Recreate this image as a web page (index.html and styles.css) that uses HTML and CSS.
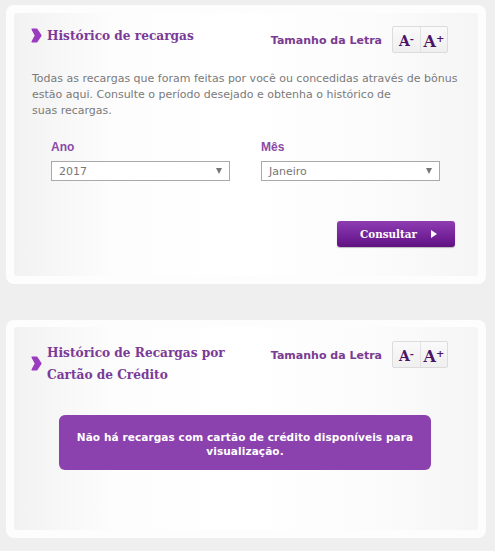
FILE: index.html
```html
<!DOCTYPE html>
<html lang="pt-BR">
<head>
<meta charset="utf-8">
<link rel="stylesheet" href="styles.css">
</head>
<body>
<div class="page">
  <section class="card">
    <div class="panel">
      <div class="header">
        <h2 class="title">
          <svg class="chev" viewBox="0 0 11 15" width="11" height="15"><path d="M1.2 1.2 L5.6 1.2 L9.8 7.5 L5.6 13.8 L1.2 13.8 L4.6 7.5 Z" fill="#9b3cbf" stroke="#9b3cbf" stroke-linejoin="round" stroke-width="1.6"/></svg>
          <span>Histórico de recargas</span>
        </h2>
        <div class="fontsize">
          <span class="fs-label">Tamanho da Letra</span>
          <div class="fs-btns"><span class="fs-btn">A<sup>-</sup></span><span class="fs-btn">A<sup>+</sup></span></div>
        </div>
      </div>
      <p class="intro">Todas as recargas que foram feitas por você ou concedidas através de bônus estão aqui. Consulte o período desejado e obtenha o histórico de<br>suas recargas.</p>
      <div class="form">
        <div class="field">
          <label class="lbl">Ano</label>
          <div class="select"><span>2017</span><i class="arrow"></i></div>
        </div>
        <div class="field">
          <label class="lbl">Mês</label>
          <div class="select"><span>Janeiro</span><i class="arrow"></i></div>
        </div>
      </div>
      <div class="actions">
        <button class="btn">Consultar <i class="play"></i></button>
      </div>
    </div>
  </section>

  <section class="card card2">
    <div class="panel panel2">
      <div class="header header2">
        <h2 class="title title2">
          <svg class="chev" viewBox="0 0 11 15" width="11" height="15"><path d="M1.2 1.2 L5.6 1.2 L9.8 7.5 L5.6 13.8 L1.2 13.8 L4.6 7.5 Z" fill="#9b3cbf" stroke="#9b3cbf" stroke-linejoin="round" stroke-width="1.6"/></svg>
          <span>Histórico de Recargas por<br>Cartão de Crédito</span>
        </h2>
        <div class="fontsize">
          <span class="fs-label">Tamanho da Letra</span>
          <div class="fs-btns"><span class="fs-btn">A<sup>-</sup></span><span class="fs-btn">A<sup>+</sup></span></div>
        </div>
      </div>
      <div class="notice">Não há recargas com cartão de crédito disponíveis para visualização.</div>
    </div>
  </section>
</div>
</body>
</html>
```

FILE: styles.css
```css
html, body { margin: 0; padding: 0; }
body {
  background: #efefef;
  font-family: "DejaVu Sans", Verdana, sans-serif;
}
.page {
  padding: 5px 9px 0 6px;
}
.card {
  background: #fdfdfd;
  border-radius: 8px;
  padding: 8px 8px 8px 8px;
}
.card2 { margin-top: 36px; padding-top: 7px; }
.panel {
  background: linear-gradient(to right, #f2f2f2 0%, #fdfdfd 22%, #ffffff 50%, #fbfbfb 80%, #f5f5f5 100%);
  border-radius: 3px;
  height: 263px;
  box-sizing: border-box;
  padding: 13px 30px 0 17px;
}
.panel2 { height: 203px; padding-top: 14px; }
.header {
  display: flex;
  justify-content: space-between;
  align-items: flex-start;
}
.title {
  margin: -2px 0 0;
  display: flex;
  align-items: center;
  gap: 5px;
  font-family: "DejaVu Serif Condensed", "DejaVu Serif", serif;
  font-weight: bold;
  font-size: 13.5px;
  line-height: 22px;
  color: #7b3a97;
}
.title2 { margin-top: 0; }
.chev { flex: none; display: block; }
.fontsize {
  display: flex;
  align-items: center;
  gap: 10px;
}
.fs-label {
  font-family: "DejaVu Sans", Verdana, sans-serif;
  font-weight: bold;
  font-size: 11px;
  color: #7a3b91;
  padding-top: 1px;
}
.fs-btns {
  display: flex;
  border: 1px solid #dcdcdc;
  border-radius: 2px;
  background: linear-gradient(#fafafa, #efefef);
  height: 25px;
}
.fs-btn {
  width: 27px;
  box-sizing: border-box;
  display: flex;
  align-items: center;
  justify-content: center;
  font-family: "DejaVu Serif", serif;
  font-weight: bold;
  font-size: 14px;
  color: #4d1465;
  padding-top: 3px;
}
.fs-btn + .fs-btn { border-left: 1px solid #e2e2e2; font-size: 16px; }
.fs-btn sup { font-size: 10px; line-height: 0; position: relative; top: -2px; }
.intro {
  margin: 18px 0 0 1px;
  font-size: 11px;
  line-height: 16px;
  color: #7a7a7a;
  width: 430px;
}
.form {
  display: flex;
  gap: 31px;
  padding-left: 20px;
  margin-top: 21px;
}
.field { width: 179px; }
.lbl {
  display: block;
  font-family: "Liberation Sans", Arial, sans-serif;
  font-weight: bold;
  font-size: 12px;
  color: #8a4aa6;
  line-height: 15px;
  margin-bottom: 6px;
}
.select {
  height: 20px;
  box-sizing: border-box;
  border: 1px solid #a9a9a9;
  background: #fff;
  display: flex;
  align-items: center;
  justify-content: space-between;
  padding: 0 7px 0 7px;
  font-size: 11px;
  color: #777;
}
.arrow {
  width: 0; height: 0;
  border-left: 3px solid transparent;
  border-right: 3px solid transparent;
  border-top: 6px solid #777;
}
.actions {
  display: flex;
  justify-content: flex-end;
  margin-top: 40px;
  margin-right: -7px;
}
.btn {
  width: 118px;
  height: 26px;
  border: none;
  border-radius: 3px;
  background: linear-gradient(#8e3db0 0%, #7a28a0 45%, #5f1181 100%);
  box-shadow: 0 1px 1px rgba(0,0,0,0.25);
  color: #fff;
  font-family: "DejaVu Serif Condensed", "DejaVu Serif", serif;
  font-weight: bold;
  font-size: 11.5px;
  display: flex;
  align-items: center;
  justify-content: flex-end;
  gap: 14px;
  padding: 0 18px 0 0;
}
.play {
  width: 0; height: 0;
  border-top: 4px solid transparent;
  border-bottom: 4px solid transparent;
  border-left: 6px solid #fff;
}
.notice {
  width: 372px;
  margin: 30px 0 0 28px;
  box-sizing: border-box;
  height: 55px;
  border-radius: 6px;
  background: #8b42ae;
  color: #fff;
  font-weight: bold;
  font-size: 10.5px;
  line-height: 14px;
  letter-spacing: 0.1px;
  text-align: center;
  padding: 15px 6px 0;
}
```
